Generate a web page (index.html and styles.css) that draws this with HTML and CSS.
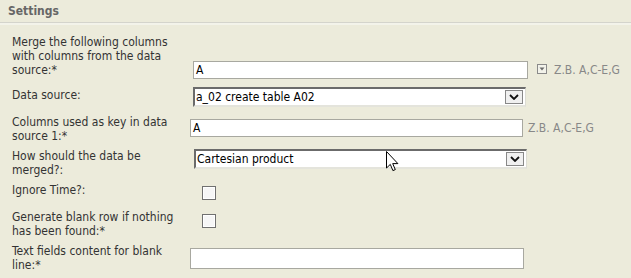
FILE: index.html
```html
<!DOCTYPE html>
<html>
<head>
<meta charset="utf-8">
<link rel="stylesheet" href="styles.css">
</head>
<body>
<div class="panel">
  <div class="header">Settings</div>
  <div class="form">
    <div class="row r1">
      <div class="label">Merge the following columns with columns from the data source:*</div>
      <div class="ctl c1">
        <div class="input w335">A</div>
        <span class="hinticon"><svg width="10" height="10" viewBox="0 0 10 10"><rect x="0.5" y="0.5" width="9" height="9" fill="#f2f2ea" stroke="#8a8a8a"/><path d="M2.5 3.5h5l-2.5 3z" fill="#6a6a6a"/></svg></span>
        <span class="hint">Z.B. A,C-E,G</span>
      </div>
    </div>
    <div class="row r2">
      <div class="label">Data source:</div>
      <div class="ctl c2">
        <div class="select">
          <span class="val">a_02 create table A02</span>
          <span class="btn"><svg width="10" height="6" viewBox="0 0 10 6"><path d="M1 1l4 4 4-4" fill="none" stroke="#111" stroke-width="1.8"/></svg></span>
        </div>
      </div>
    </div>
    <div class="row r3">
      <div class="label">Columns used as key in data source 1:*</div>
      <div class="ctl c3">
        <div class="input w333">A</div>
        <span class="hint h3">Z.B. A,C-E,G</span>
      </div>
    </div>
    <div class="row r4">
      <div class="label">How should the data be merged?:</div>
      <div class="ctl c4">
        <div class="select">
          <span class="val">Cartesian product</span>
          <span class="btn"><svg width="10" height="6" viewBox="0 0 10 6"><path d="M1 1l4 4 4-4" fill="none" stroke="#111" stroke-width="1.8"/></svg></span>
        </div>
      </div>
    </div>
    <div class="row r5">
      <div class="label">Ignore Time?:</div>
      <div class="ctl c5"><span class="check"></span></div>
    </div>
    <div class="row r6">
      <div class="label">Generate blank row if nothing has been found:*</div>
      <div class="ctl c6"><span class="check"></span></div>
    </div>
    <div class="row r7">
      <div class="label">Text fields content for blank line:*</div>
      <div class="ctl c7"><div class="input w334 tall"></div></div>
    </div>
  </div>
  <svg class="cursor" width="14" height="22" viewBox="0 0 14 22"><path d="M0.5 0.5v16.5l3.8-3.6 2.6 6.2 2.4-1-2.6-6h5.2z" fill="#fff" stroke="#000" stroke-width="1"/></svg>
</div>
</body>
</html>
```
FILE: styles.css
```css
html, body {
  margin: 0;
  padding: 0;
  background: #ecebdb;
}
body {
  font-family: "DejaVu Sans Condensed", "DejaVu Sans", sans-serif;
  font-size: 12px;
  color: #333;
}
.panel {
  position: relative;
  width: 631px;
  height: 278px;
  overflow: hidden;
}
.header {
  font-weight: bold;
  color: #666;
  font-size: 12px;
  padding: 4px 0 0 8px;
  height: 18px;
  line-height: 14px;
  border-bottom: 1px solid #d4d4cc;
  box-shadow: 0 2px 0 #f3f3ea;
}
.form {
  padding: 12px 0 0 12px;
}
.row {
  display: flex;
  align-items: flex-start;
}
.label {
  width: 172px;
  line-height: 14px;
  flex: none;
}
.ctl {
  display: flex;
  align-items: center;
}
.input {
  background: #fff;
  border: 1px solid #a8a8a0;
  box-sizing: border-box;
  height: 18px;
  line-height: 16px;
  padding-left: 2px;
  color: #000;
}
.input.tall { height: 21px; }
.w335 { width: 335px; }
.w333 { width: 333px; }
.w334 { width: 334px; }
.hinticon {
  display: flex;
  margin-left: 9px;
  margin-top: -3px;
}
.hint {
  color: #888;
  margin-left: 7px;
  white-space: nowrap;
}
.h3 { margin-left: 5px; }
.select {
  width: 333px;
  height: 20px;
  box-sizing: border-box;
  background: #fff;
  border-top: 2px solid #6b6b6b;
  border-left: 2px solid #6b6b6b;
  border-right: 1px solid #dcdcd4;
  border-bottom: 2px solid #e4e4dc;
  display: flex;
  align-items: center;
  justify-content: space-between;
  color: #000;
}
.val { padding-left: 1px; }
.btn {
  width: 18px;
  height: 14px;
  box-sizing: border-box;
  border: 1px solid #888;
  background: #f0f0f0;
  display: flex;
  align-items: center;
  justify-content: center;
  margin-right: 2px;
}
.check {
  display: block;
  width: 14px;
  height: 14px;
  box-sizing: border-box;
  border: 1px solid #707070;
  background: #f6f6f6;
  box-shadow: inset 0 0 0 1px #fff;
}
.r1 { margin-top: 0; }
.c1 { margin-top: 26px; margin-left: 9px; }
.r2 { margin-top: 7px; }
.r2 .label { margin-top: 2px; }
.c2 { margin-top: 1px; margin-left: 9px; }
.r3 { margin-top: 8px; }
.c3 { margin-top: 4px; margin-left: 6px; }
.r4 { margin-top: 6px; }
.c4 { margin-left: 10px; }
.r5 { margin-top: 6px; }
.c5 { margin-top: 3px; margin-left: 18px; }
.r6 { margin-top: 10px; }
.c6 { margin-top: 4px; margin-left: 18px; }
.r7 { margin-top: 6px; }
.c7 { margin-top: 4px; margin-left: 6px; }
.cursor {
  position: absolute;
  left: 386px;
  top: 151px;
}
```
